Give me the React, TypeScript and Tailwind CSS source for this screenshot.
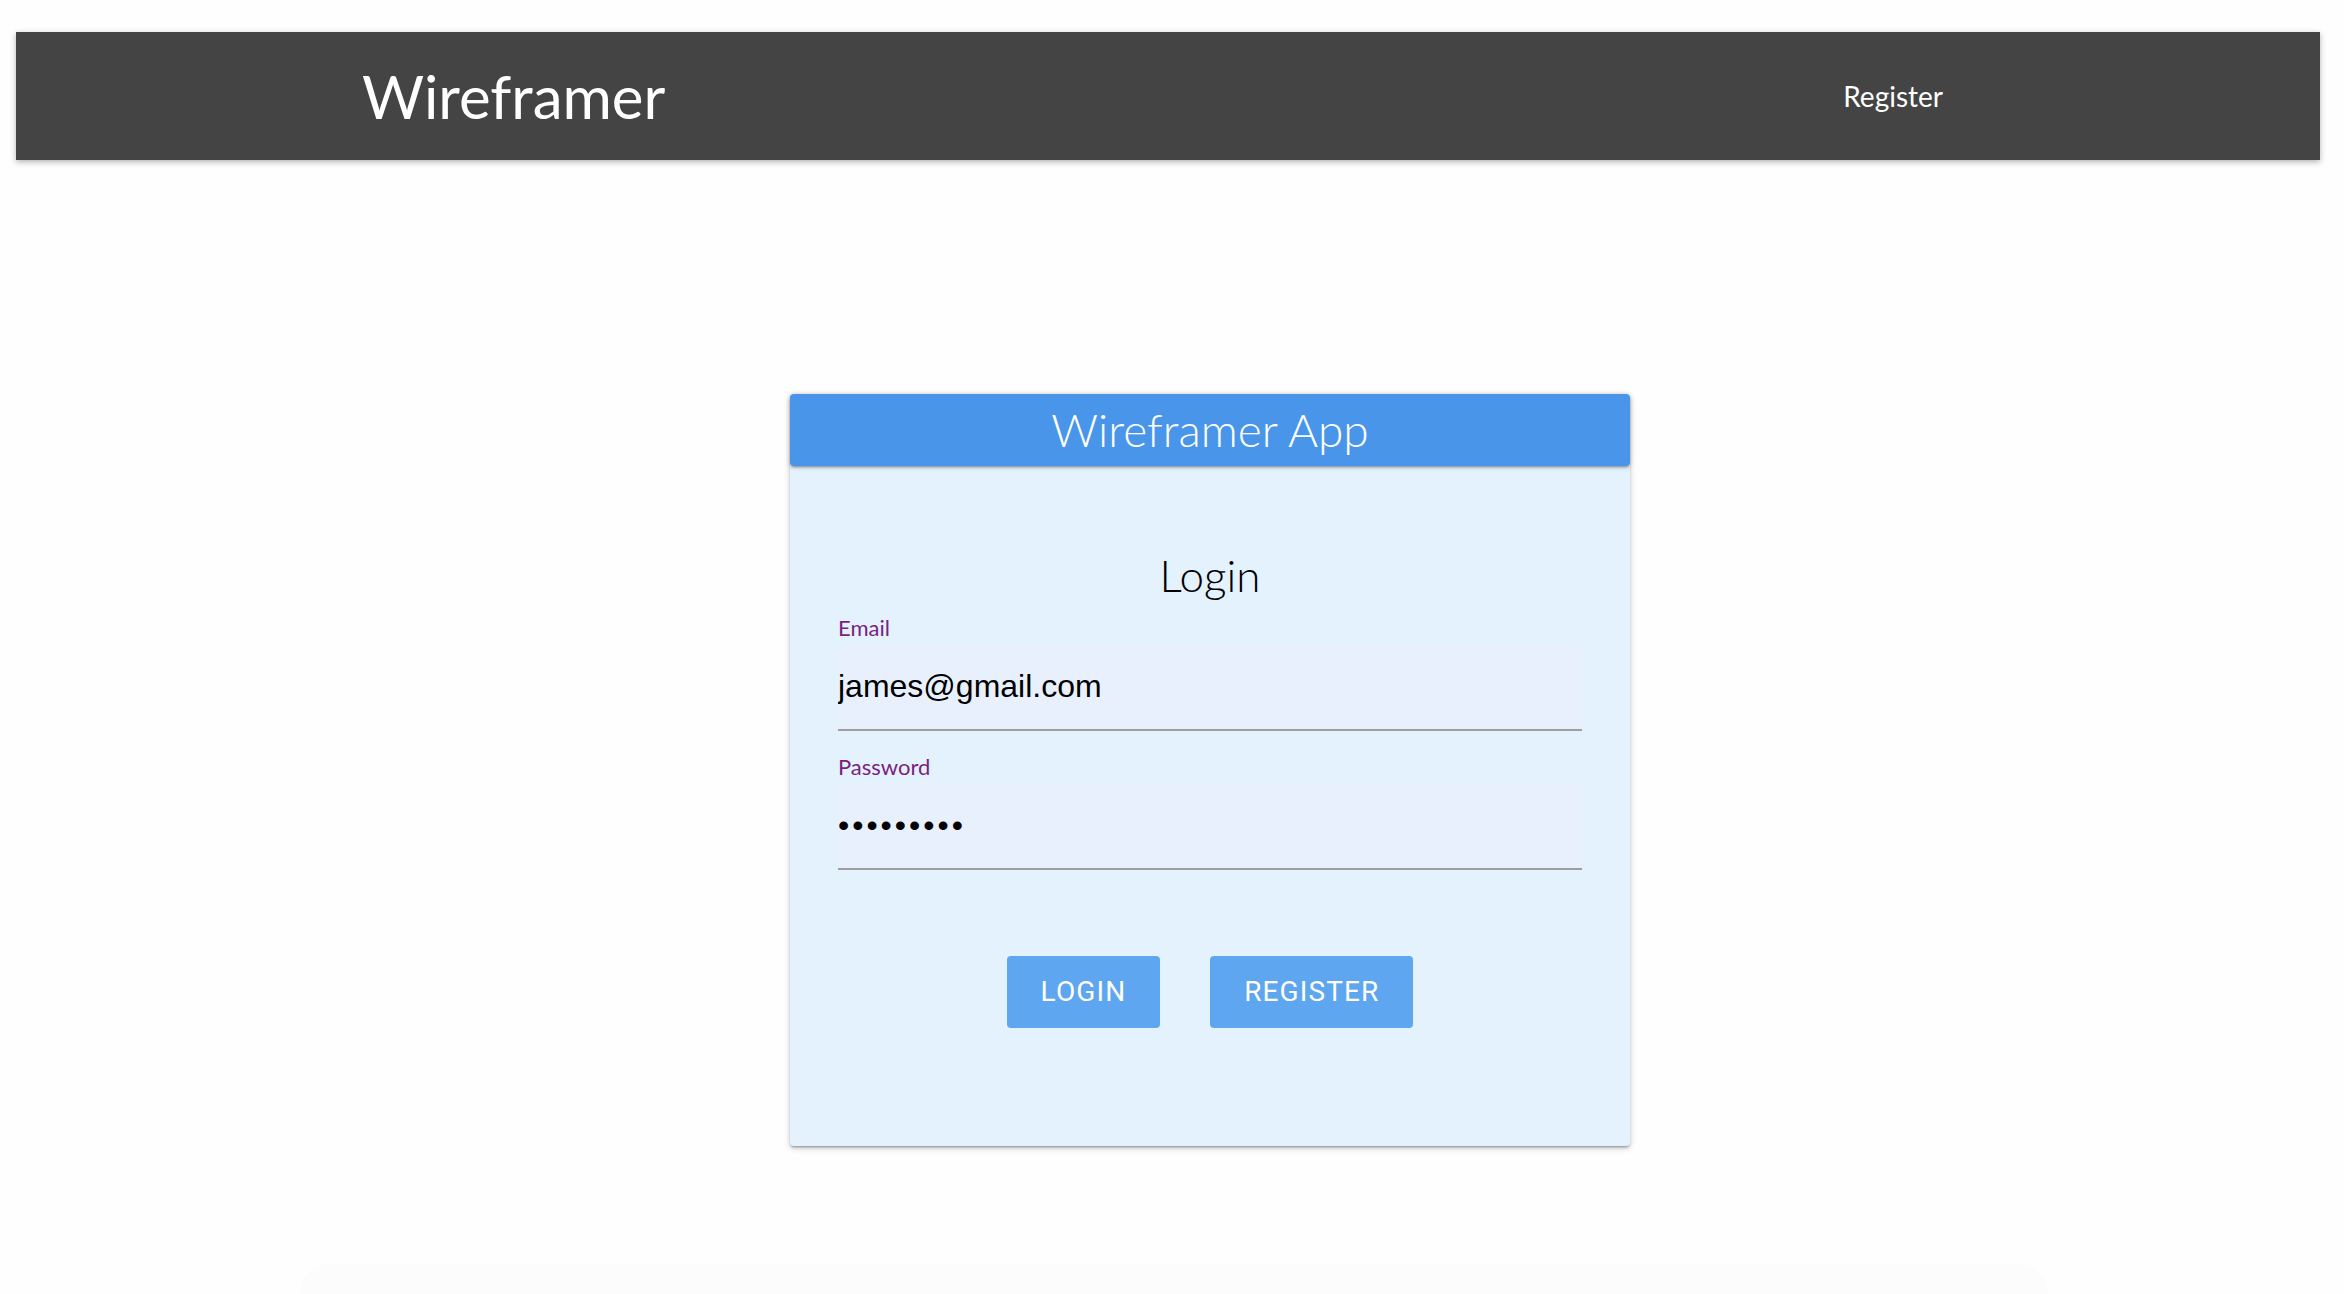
const gill = "font-['Lato','Open_Sans',sans-serif]";

const Field = ({ label, type, value }: { label: string; type: string; value: string }) => {
  return (
    <label className="flex flex-col">
      <span className={`${gill} text-[22px] leading-none text-[#7a1f80]`}>{label}</span>
      <input
        type={type}
        defaultValue={value}
        readOnly
        className={`mt-[5px] h-[87px] w-full border-b-2 border-[#9e9e9e] bg-[#e8f0fe] font-['Liberation_Sans',Arial,sans-serif] text-[32px] text-black outline-none ${
          type === "password" ? "tracking-[3px]" : ""
        }`}
      />
    </label>
  );
};

const LoginCard = () => {
  return (
    <div className="w-[840px] rounded bg-[#e3f2fd] shadow-[0_2px_2px_0_rgba(0,0,0,0.14),0_3px_1px_-2px_rgba(0,0,0,0.12),0_2px_6px_0_rgba(0,0,0,0.22)]">
      <div className="flex h-[72px] items-center justify-center rounded bg-[#4895ea] shadow-[0_2px_2px_0_rgba(0,0,0,0.14),0_3px_1px_-2px_rgba(0,0,0,0.12),0_1px_5px_0_rgba(0,0,0,0.2)]">
        <h1 className={`${gill} text-[46px] font-light leading-none text-white`}>Wireframer App</h1>
      </div>
      <form className="flex flex-col px-[48px] pb-[118px] pt-[87px]">
        <h2 className={`${gill} text-center text-[44px] font-light leading-none text-black`}>Login</h2>
        <div className="mt-[20px] flex flex-col gap-[25px]">
          <Field label="Email" type="email" value="james@gmail.com" />
          <Field label="Password" type="password" value="123456789" />
        </div>
        <div className="mt-[86px] flex justify-center gap-[50px]">
          <button
            type="button"
            className="h-[72px] rounded bg-[#5ea6ef] px-[34px] font-['Roboto',sans-serif] text-[28px] font-normal uppercase tracking-[1.1px] text-white"
          >
            Login
          </button>
          <button
            type="button"
            className="h-[72px] rounded bg-[#5ea6ef] px-[34px] font-['Roboto',sans-serif] text-[28px] font-normal uppercase tracking-[1.1px] text-white"
          >
            Register
          </button>
        </div>
      </form>
    </div>
  );
};

export default function App() {
  return (
    <div className="flex h-screen flex-col overflow-hidden bg-[#fefefe] pt-[32px]">
      <nav className="ml-[16px] mr-[24px] flex h-[128px] shrink-0 items-center justify-between bg-[#444444] pl-[346px] pr-[377px] shadow-[0_2px_6px_rgba(0,0,0,0.3)]">
        <a href="#" className={`${gill} text-[60px] leading-none text-white`}>
          Wireframer
        </a>
        <a href="#" className={`${gill} text-[28px] leading-none text-white`}>
          Register
        </a>
      </nav>
      <main className="shrink-0 pl-[790px] pt-[234px]">
        <LoginCard />
      </main>
      <div className="ml-[300px] mt-[118px] h-[80px] w-[1748px] shrink-0 rounded-t-[30px] bg-[#fcfcfc]" />
    </div>
  );
}
